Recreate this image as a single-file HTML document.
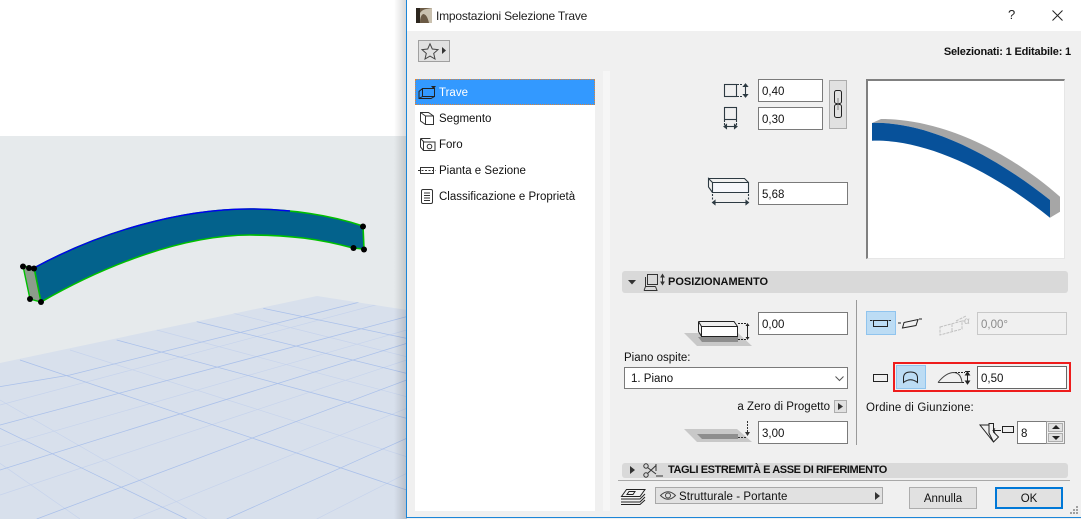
<!DOCTYPE html>
<html><head><meta charset="utf-8">
<style>
*{box-sizing:border-box}
html,body{margin:0;padding:0;width:1081px;height:519px;overflow:hidden;background:#fff;font-family:"Liberation Sans",sans-serif;font-size:11.5px;color:#111}
.a{position:absolute}
.t{position:absolute;white-space:nowrap;line-height:14px}
.in{position:absolute;background:#fff;border:1px solid #7a7a7a;height:23px;line-height:24px;padding-left:3px;font-size:11.5px;color:#111}
svg{position:absolute;overflow:visible}
.b{font-weight:bold;font-size:11px;color:#111}
</style></head><body>
<svg style="left:0;top:0" width="407" height="519" viewBox="0 0 407 519">
<defs>
<clipPath id="fl"><polygon points="0,363 317,296 407,310 407,519 0,519"/></clipPath>
<linearGradient id="sh" x1="0" x2="1"><stop offset="0" stop-color="#000" stop-opacity="0"/><stop offset="1" stop-color="#000" stop-opacity=".16"/></linearGradient>
</defs>
<rect x="0" y="136" width="407" height="383" fill="#e6eaec"/>
<polygon points="0,363 317,296 407,310 407,519 0,519" fill="#d8e0ec"/>
<g clip-path="url(#fl)">
<g transform="translate(0,130) scale(.33333)" fill="none">
<g stroke="#c6d3ec" stroke-width="2">
<path d="M0,825 L1220,500 M0,950 L1220,600 M0,1095 L1220,690 M400,1167 L1220,835 M950,1167 L1220,1030"/>
<path d="M210,660 L1220,980 M470,600 L1220,800 M700,550 L1220,680 M0,810 L620,1167 M0,1000 L240,1167"/>
</g>
<g stroke="#aac0ea" stroke-width="2.300">
<path d="M0,770 L210,735 L490,665 L790,590 L1220,480 M0,885 L1220,560 M0,1020 L1220,640 M110,1167 L1220,750 M680,1167 L1220,925"/>
<path d="M60,690 L1220,1080 M350,630 L1220,865 M590,575 L1220,730 M790,535 L1220,625 M0,895 L560,1167"/>
</g>
</g>
</g>
<rect x="394" y="0" width="13" height="519" fill="url(#sh)"/>
<path d="M34,268 C100,232 180,209 250,209 C290,209 330,215 363,226 L364,249 L353,248 C320,239 290,235 250,235 C180,235 100,268 41,302 Z" fill="#03628c" stroke="#00c000" stroke-width="1.600"/>
<path d="M23,266 L34,268 L41,302 L30,299 Z" fill="#8c9c8c" stroke="#00c000" stroke-width="1.400"/>
<path d="M34,268 C100,232 180,209 250,209 Q270,209 290,211" fill="none" stroke="#0000f0" stroke-width="1.500"/>
<g fill="#000"><circle cx="23" cy="266.500" r="3"/><circle cx="29" cy="268" r="3"/><circle cx="34" cy="268.500" r="3"/><circle cx="30" cy="299" r="3"/><circle cx="41" cy="302" r="3"/><circle cx="363" cy="226.500" r="3"/><circle cx="364" cy="249.500" r="3"/><circle cx="353.500" cy="248" r="3"/></g>
</svg>

<div class="a" style="left:407px;top:0;width:674px;height:519px;background:#f0f0f0"></div>
<div class="a" style="left:407px;top:0;width:674px;height:31px;background:#fff"></div>
<div class="a" style="left:406px;top:517px;width:675px;height:1px;background:#1c86d8"></div>
<div class="a" style="left:406px;top:0;width:1px;height:518px;background:#1c86d8"></div>

<svg style="left:416px;top:8px" width="16" height="15"><rect width="16" height="15" fill="#6b5a45"/><path d="M0,15 Q3,2 10,1 L16,0 L16,15 L13,15 Q11,6 7,6 Q4,8 4,15Z" fill="#c9c0ae"/><rect width="4" height="15" fill="#2c261e"/></svg>
<div class="t" style="left:436px;top:9px;font-size:12px;color:#222;letter-spacing:-.2px">Impostazioni Selezione Trave</div>
<div class="t" style="left:1008px;top:8px;font-size:13px;color:#222">?</div>
<svg style="left:1052px;top:10px" width="11" height="11"><path d="M0.500,0.500 L10.500,10.500 M10.500,0.500 L0.500,10.500" stroke="#222" fill="none"/></svg>

<div class="a" style="left:418px;top:40px;width:32px;height:22px;background:#e1e1e1;border:1px solid #a0a0a0"></div>
<svg style="left:422px;top:43px" width="26" height="17"><path d="M8,0.800 L10.300,6 L16,6.600 L11.700,10.400 L13,16 L8,13.100 L3,16 L4.300,10.400 L0,6.600 L5.700,6 Z" fill="none" stroke="#444" stroke-width="1"/><path d="M20,4 L24,7.500 L20,11Z" fill="#333"/></svg>
<div class="t b" style="right:10px;top:45px;letter-spacing:-.18px">Selezionati: 1 Editabile: 1</div>

<div class="a" style="left:415px;top:79px;width:180px;height:432px;background:#fff"></div>
<div class="a" style="left:415px;top:79px;width:180px;height:26px;background:#3399ff;border:1px dotted #d8843c"></div>
<div class="a" style="left:603px;top:71px;width:7px;height:440px;background:#f6f6f6"></div>
<div class="t" style="left:439px;top:86px;color:#fff">Trave</div>
<div class="t" style="left:439px;top:112px">Segmento</div>
<div class="t" style="left:439px;top:138px">Foro</div>
<div class="t" style="left:439px;top:164px">Pianta e Sezione</div>
<div class="t" style="left:439px;top:190px">Classificazione e Proprietà</div>
<svg style="left:418px;top:85px" width="18" height="15" fill="none" stroke="#222"><path d="M4.500,3.500 H16.500 V11.500 H4.500 Z M4.500,3.500 L1,6.500 V13.500 H13 L16.500,11.500 M1,6.500 V13.500 M4.500,11.500 L1,13.500"/><path d="M13,1 H18 L15.500,4Z" fill="#222" stroke="none"/></svg>
<svg style="left:420px;top:111px" width="15" height="15" fill="none" stroke="#333"><path d="M0.500,1.500 H8.500 L13.500,5 V13.500 H5.500 L0.500,10 Z M5.500,5 H13.500 M5.500,5 V13.500 M5.500,5 L0.500,1.500"/></svg>
<svg style="left:419px;top:137px" width="17" height="15" fill="none" stroke="#333"><path d="M1.500,1.500 H11.500 M1.500,1.500 V10 L4.500,13.500 H16 V5 H5 L1.500,1.500 M4.500,5 V13.500"/><circle cx="10.500" cy="9.500" r="2.300"/></svg>
<svg style="left:418px;top:166px" width="18" height="9" fill="none" stroke="#333"><rect x="2.500" y="1.500" width="13" height="6"/><path d="M0,4.500 H18" stroke-dasharray="2 1.500"/></svg>
<svg style="left:421px;top:189px" width="12" height="15" fill="none" stroke="#333"><rect x="0.500" y="0.500" width="11" height="14" rx="1.500"/><path d="M3,4 H9 M3,6.500 H9 M3,9 H9 M3,11.500 H9"/></svg>

<!-- dims -->
<svg style="left:723px;top:83px" width="28" height="50" fill="none" stroke="#2d3a42" stroke-width="1.100">
<rect x="1.500" y="1.500" width="12" height="12"/><path d="M14,1.500 H20 M14,13.500 H20" stroke-dasharray="2 1"/><path d="M22.500,2 V13" /><path d="M20.500,3.500 L22.500,1 L24.500,3.500Z M20.500,11.500 L22.500,14 L24.500,11.500Z" fill="#2d3a42"/>
<rect x="1.500" y="24.500" width="12" height="12"/><path d="M1.500,37 V44 M13.500,37 V44" stroke-dasharray="2 1"/><path d="M2,43.500 H13"/><path d="M3.500,41.500 L1,43.500 L3.500,45.500Z M11.500,41.500 L14,43.500 L11.500,45.500Z" fill="#2d3a42"/>
</svg>
<div class="in" style="left:758px;top:79px;width:65px;">0,40</div>
<div class="in" style="left:758px;top:107px;width:65px;">0,30</div>
<div class="a" style="left:829px;top:80px;width:18px;height:49px;background:#e1e1e1;border:1px solid #adadad"></div>
<svg style="left:834px;top:90px" width="8" height="28" fill="none" stroke="#222"><rect x="0.500" y="0.500" width="7" height="13" rx="2"/><rect x="0.500" y="14.500" width="7" height="13" rx="2"/><path d="M4,8 V20" stroke="#888"/></svg>
<svg style="left:707px;top:177px" width="44" height="29" fill="none" stroke="#2d3a42" stroke-width="1.100"><path d="M5.500,5.500 H41.500 V15.500 H5.500 Z" fill="#f6f7fb"/><path d="M5.500,15.500 L1.500,10 V1.500 L5.500,5.500 M1.500,1.500 H37.500 L41.500,5.500"/><path d="M5.500,17 V24 M41.500,17 V24" stroke-dasharray="2 1.500"/><path d="M6,25.500 H41"/><path d="M8,23.500 L5.500,25.500 L8,27.500Z M39,23.500 L41.500,25.500 L39,27.500Z" fill="#2d3a42"/></svg>
<div class="in" style="left:758px;top:182px;width:90px;">5,68</div>

<!-- preview -->
<div class="a" style="left:866px;top:79px;width:199px;height:180px;background:#fff;border:1px solid #e6e6e6;border-top:2px solid #808080;border-left:2px solid #808080"></div>
<svg style="left:866px;top:79px" width="199" height="180">
<path d="M6,44 L15,40 C65,40 130,62 194,117.700 V132.700 L184,138.700 V121 C120,70 55,42 6,44Z" fill="#a6a6a6"/>
<path d="M6,44 C55,42 120,70 184,121 V138.700 C120,87 55,60 6,61.700 Z" fill="#07519a"/>
</svg>

<!-- section -->
<div class="a" style="left:622px;top:271px;width:446px;height:22px;background:#d9d9d9;border-radius:3px"></div>
<svg style="left:628px;top:280px" width="8" height="5"><path d="M0,0 H8 L4,4.500Z" fill="#333"/></svg>
<svg style="left:643px;top:274px" width="22" height="18" fill="none" stroke="#333"><rect x="4.500" y="0.500" width="10" height="10"/><path d="M2.500,3 V12.500 H12.500 M1,16.500 H14 L12.500,12.500 M2.500,12.500 L1,16.500"/><path d="M19.500,1 V10" /><path d="M18,3 L19.500,0.500 L21,3Z M18,8 L19.500,10.500 L21,8Z" fill="#333"/></svg>
<div class="t b" style="left:668px;top:275px;">POSIZIONAMENTO</div>

<svg style="left:684px;top:320px" width="70" height="32">
<polygon points="0,13 54,13 68,26 13,26" fill="#c8c8c8"/>
<polygon points="14,17 54,17 54,22 18,22" fill="#8e8e8e"/>
<g fill="none" stroke="#222"><rect x="17.500" y="6.500" width="36" height="10" fill="#fff"/><path d="M14.500,1.500 H50 L53.500,6.500 M14.500,1.500 V11.500 L17.500,16.500 M14.500,1.500 L17.500,6.500"/><path d="M54,3.500 H62 M54,19.500 H62" stroke-dasharray="2 1"/><path d="M63.500,4 V19"/></g>
<path d="M61.500,6 L63.500,3 L65.500,6Z M61.500,17 L63.500,20 L65.500,17Z" fill="#222"/></svg>
<div class="in" style="left:758px;top:312px;width:90px;">0,00</div>
<div class="t" style="left:624px;top:351px;">Piano ospite:</div>
<div class="in" style="left:624px;top:367px;width:224px;height:22px;line-height:22px;padding-left:6px;">1. Piano</div>
<svg style="left:835px;top:376px" width="9" height="6"><path d="M0.500,0.500 L4.500,4.500 L8.500,0.500" fill="none" stroke="#555"/></svg>
<div class="t" style="right:251px;top:400px;letter-spacing:.03px">a Zero di Progetto</div>
<div class="a" style="left:834px;top:400px;width:13px;height:13px;background:#e1e1e1;border:1px solid #adadad"></div>
<svg style="left:838px;top:403px" width="5" height="7"><path d="M0,0 L5,3.500 L0,7Z" fill="#333"/></svg>
<svg style="left:684px;top:418px" width="70" height="26"><polygon points="0,11 53,11 68,24 13,24" fill="#c8c8c8"/><polygon points="13,16 54,16 54,21 18,21" fill="#8e8e8e"/><path d="M54,19.500 H62" stroke="#333" stroke-dasharray="2 1"/><path d="M63.500,3 V14" stroke="#333" stroke-dasharray="2 1"/><path d="M61,14 H66 L63.500,18Z" fill="#333"/></svg>
<div class="in" style="left:758px;top:421px;width:90px;">3,00</div>

<div class="a" style="left:856px;top:300px;width:1px;height:145px;background:#9a9a9a"></div>

<div class="a" style="left:866px;top:311px;width:30px;height:24px;background:#bcdcf4;border:1px solid #90c4ee"></div>
<svg style="left:870px;top:316px" width="52" height="15" fill="none" stroke="#222"><rect x="3.500" y="4.500" width="14" height="6"/><path d="M0,4.500 H2.500 M18.500,4.500 H21"/><path d="M34,6.500 L48,3.500 L46,9.500 L32.500,12 Z M28,7 H31 M49,3 H52"/></svg>
<svg style="left:938px;top:313px" width="36" height="24" fill="none" stroke="#c0c0c0"><path d="M2,14 L24,8 V16 L2,22 Z M14,11 V19 M24,8 H28 M18,8 L28,3" stroke-dasharray="3 1"/></svg>
<div class="t" style="left:964px;top:315px;color:#bdbdbd;font-size:10px;">α</div>
<div class="in" style="left:977px;top:312px;width:90px;border-color:#c8c8c8;background:#f0f0f0;color:#8a8a8a;">0,00°</div>

<div class="a" style="left:893px;top:362px;width:178px;height:30px;border:2px solid #ee1c1c"></div>
<div class="in" style="left:977px;top:366px;width:90px;border-color:#666;">0,50</div>
<svg style="left:873px;top:374px" width="16" height="9"><rect x="0.500" y="0.500" width="14" height="7" fill="none" stroke="#222"/></svg>
<div class="a" style="left:896px;top:365px;width:30px;height:24px;background:#bcdcf4;border:1px solid #90c4ee"></div>
<svg style="left:903px;top:371px" width="16" height="13" fill="none" stroke="#222"><path d="M0.500,7 Q0.500,1 7.500,1 Q14.500,1 14.500,7 V11.500 Q7.500,6 0.500,11.500 Z"/></svg>
<svg style="left:937px;top:369px" width="36" height="21" fill="none" stroke="#222"><path d="M1,13.500 Q9,3.500 17,3.500 Q24,4 25,13.500 H1" stroke="#444"/><path d="M18,3.500 H28 M25,13.500 H28" stroke-dasharray="2 1"/><path d="M30.500,3 V14"/><path d="M28,2.500 H33 M28.500,6 L30.500,3 L32.500,6Z M28.500,12 L30.500,15 L32.500,12Z" fill="#222"/></svg>
<div class="t" style="left:866px;top:401px;letter-spacing:.15px">Ordine di Giunzione:</div>
<svg style="left:979px;top:423px" width="36" height="24" fill="none" stroke="#222"><path d="M1,2 H10 V0.500 H14.500 V9 L19.500,14 L14.500,19 L1,2 Z M10,2 V10 L14.500,19"/><path d="M14,7.500 H22 M16,5.500 L14,7.500 L16,9.500"/><rect x="23.500" y="3.500" width="11" height="6" fill="#eee"/></svg>
<div class="in" style="left:1017px;top:421px;width:30px;height:23px;">8</div>
<div class="a" style="left:1046px;top:421px;width:19px;height:23px;background:#f0f0f0;border:1px solid #999;"></div>
<div class="a" style="left:1048px;top:423px;width:15px;height:9px;background:#e1e1e1;border:1px solid #adadad"></div>
<div class="a" style="left:1048px;top:433px;width:15px;height:9px;background:#e1e1e1;border:1px solid #adadad"></div>
<svg style="left:1052px;top:425px" width="8" height="16"><path d="M0,4 H8 L4,0Z M0,11 H8 L4,15Z" fill="#222"/></svg>

<!-- bottom -->
<div class="a" style="left:622px;top:463px;width:446px;height:15px;background:#d9d9d9;border-radius:3px"></div>
<svg style="left:630px;top:466px" width="5" height="8"><path d="M0,0 L5,4 L0,8Z" fill="#333"/></svg>
<svg style="left:643px;top:463px" width="20" height="15" fill="none" stroke="#333"><circle cx="3" cy="3" r="2.200"/><circle cx="3" cy="12" r="2.200"/><path d="M4.500,4.500 L13,11 M4.500,10.500 L13,2.500 M13,13 H20 M13,1 V8"/></svg>
<div class="t b" style="left:668px;top:463px;letter-spacing:-.42px">TAGLI ESTREMITÀ E ASSE DI RIFERIMENTO</div>
<div class="a" style="left:618px;top:480px;width:452px;height:1px;background:#a8a8a8"></div>
<svg style="left:620px;top:488px" width="26" height="17" fill="none" stroke="#222"><path d="M6.500,1.500 H25 L20,8.500 H1.500 Z M9,3.500 H15 L13,6.500 H7 Z M1,11 H20 L25,6 M1,14 H20 L25,9 M1,16.500 H20 L25,12"/></svg>
<div class="a" style="left:655px;top:487px;width:228px;height:17px;background:#e1e1e1;border:1px solid #a8a8a8"></div>
<svg style="left:660px;top:490px" width="16" height="11" fill="none" stroke="#444"><path d="M0.500,5.500 Q8,-2 15.500,5.500 Q8,13 0.500,5.500 Z"/><circle cx="8" cy="5.500" r="2.500"/></svg>
<div class="t" style="left:679px;top:490px;letter-spacing:.08px">Strutturale - Portante</div>
<svg style="left:875px;top:492px" width="5" height="8"><path d="M0,0 L5,4 L0,8Z" fill="#333"/></svg>
<div class="a" style="left:909px;top:487px;width:68px;height:22px;background:#e1e1e1;border:1px solid #adadad;text-align:center;line-height:22px">Annulla</div>
<div class="a" style="left:995px;top:487px;width:68px;height:22px;background:#e1e1e1;border:2px solid #0078d7;text-align:center;line-height:20px">OK</div>
<svg style="left:1069px;top:505px" width="10" height="10" fill="#a0a0a0"><rect x="7" y="1" width="2" height="2"/><rect x="4" y="4" width="2" height="2"/><rect x="7" y="4" width="2" height="2"/><rect x="1" y="7" width="2" height="2"/><rect x="4" y="7" width="2" height="2"/><rect x="7" y="7" width="2" height="2"/></svg>
</body></html>
